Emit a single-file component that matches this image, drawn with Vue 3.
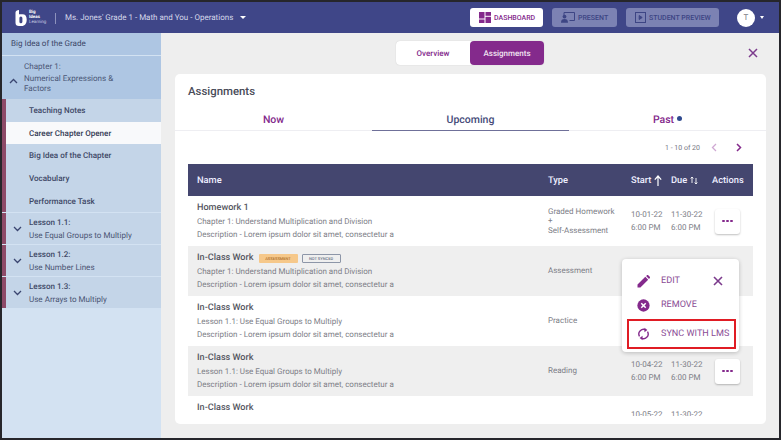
<template>
  <div class="frame">
    <header class="topbar">
      <div class="brand">
        <svg class="logo" width="12" height="16" viewBox="0 0 12 16">
          <path d="M0.5 2.5C0.5 1 2 0.3 4 0V4.2H7.5C10.2 4.2 11.7 6 11.7 9.5C11.7 13.6 10 16 6.5 16H4C1.7 16 0.5 14.8 0.5 12.7Z" fill="#fff" />
          <rect x="4.4" y="6.6" width="3" height="6.6" rx="1.5" fill="#3f4688" />
        </svg>
        <div class="logo-text"><span>Big</span><span>Ideas</span><span class="thin">Learning</span></div>
      </div>
      <div class="course">
        <span>Ms. Jones' Grade 1 - Math and You - Operations</span>
        <i class="caret"></i>
      </div>
      <div class="top-actions">
        <button class="top-btn active dash">
          <svg width="12" height="11" viewBox="0 0 12 11" fill="#842a8c">
            <rect x="0" y="0" width="5.5" height="6.5" /><rect x="6.5" y="0" width="5.5" height="3.8" />
            <rect x="0" y="7.5" width="5.5" height="3.5" /><rect x="6.5" y="4.8" width="5.5" height="6.2" />
          </svg>
          DASHBOARD
        </button>
        <button class="top-btn present">
          <svg width="14" height="11" viewBox="0 0 14 11" fill="none" stroke="#3d4584">
            <path d="M3 3V0.5H13.5V8.5H10" />
            <circle cx="3.5" cy="4.6" r="1.9" fill="#3d4584" stroke="none" />
            <path d="M0 10.8C0 8 1.2 7 3.5 7S7 8 7 10.8Z" fill="#3d4584" stroke="none" />
            <path d="M8.5 8.5H11" />
          </svg>
          PRESENT
        </button>
        <button class="top-btn preview">
          <svg width="11" height="11" viewBox="0 0 11 11" fill="none" stroke="#3d4584" stroke-width="1">
            <rect x="0.5" y="0.5" width="10" height="10" />
            <path d="M4.2 3.5L7.2 5.5L4.2 7.5Z" fill="#3d4584" />
          </svg>
          STUDENT PREVIEW
        </button>
      </div>
      <div class="avatar">T</div>
      <i class="caret small"></i>
    </header>

    <div class="body">
      <aside class="sidebar">
        <div class="side-top">Big Idea of the Grade</div>
        <div class="side-chapter">
          <svg class="chev" width="9" height="6" viewBox="0 0 9 6"><path d="M1 5L4.5 1.5L8 5" fill="none" stroke="#3a4570" stroke-width="1.3" /></svg>
          <div>
            <div>Chapter 1:</div>
            <div class="chapter-name">Numerical Expressions &amp; Factors</div>
          </div>
        </div>
        <div class="side-sub">
          <div v-for="item in subItems" :key="item" class="sub-item" :class="{ current: item === 'Career Chapter Opener' }">{{ item }}</div>
        </div>
        <div v-for="lesson in lessons" :key="lesson.title" class="lesson">
          <svg class="chev" width="9" height="6" viewBox="0 0 9 6"><path d="M1 1L4.5 4.5L8 1" fill="none" stroke="#3a4570" stroke-width="1.3" /></svg>
          <div>
            <div class="lesson-title">{{ lesson.title }}</div>
            <div>{{ lesson.name }}</div>
          </div>
        </div>
      </aside>

      <main class="content">
        <div class="switch-row">
          <div class="switch">
            <div class="switch-item">Overview</div>
            <div class="switch-item on">Assignments</div>
          </div>
          <svg class="close-main" width="10" height="10" viewBox="0 0 10 10"><path d="M1 1L9 9M9 1L1 9" stroke="#7b3a8c" stroke-width="1.5" /></svg>
        </div>

        <section class="card">
          <h2>Assignments</h2>
          <div class="tabs">
            <div class="tab now">Now</div>
            <div class="tab upcoming">Upcoming</div>
            <div class="tab past">Past<i class="dot"></i></div>
          </div>
          <div class="pager">
            <span>1 - 10 of 20</span>
            <svg width="6" height="9" viewBox="0 0 6 9"><path d="M5 1L1.5 4.5L5 8" fill="none" stroke="#cfa9d3" stroke-width="1.3" /></svg>
            <svg width="6" height="9" viewBox="0 0 6 9"><path d="M1 1L4.5 4.5L1 8" fill="none" stroke="#842a8c" stroke-width="1.5" /></svg>
          </div>

          <div class="table">
            <div class="row head">
              <div class="c-name">Name</div>
              <div class="c-type">Type</div>
              <div class="c-date">Start
                <svg width="8" height="11" viewBox="0 0 8 11"><path d="M4 11V1.5M0.8 4.6L4 1L7.2 4.6" fill="none" stroke="#fff" stroke-width="1.2" /></svg>
              </div>
              <div class="c-date">Due
                <svg width="8" height="9" viewBox="0 0 8 9"><path d="M2 7V1M0.7 2.5L2 1L3.3 2.5M6 2V8M4.7 6.5L6 8L7.3 6.5" fill="none" stroke="#fff" stroke-width="0.9" /></svg>
              </div>
              <div class="c-act">Actions</div>
            </div>

            <div class="rows">
              <div v-for="(row, i) in rows" :key="i" class="row" :class="{ shaded: i % 2 === 1 }">
                <div class="c-name" :class="{ 'title-only': !row.chapter }">
                  <div class="title">
                    {{ row.title }}
                    <span v-if="row.tags" class="tag orange">ASSESSMENT</span>
                    <span v-if="row.tags" class="tag outline">NOT SYNCED</span>
                  </div>
                  <template v-if="row.chapter">
                    <div>{{ row.chapter }}</div>
                    <div>Description - Lorem ipsum dolor sit amet, consectetur a</div>
                  </template>
                </div>
                <div class="c-type" :class="{ stacked: row.type === 'graded' }">
                  <template v-if="row.type === 'graded'">Graded Homework<br />+<br />Self-Assessment</template>
                  <template v-else>{{ row.type }}</template>
                </div>
                <template v-if="row.start">
                  <div class="c-date">{{ row.start }}<br />6:00 PM</div>
                  <div class="c-date">{{ row.due }}<br />6:00 PM</div>
                </template>
                <div v-if="row.dots" class="c-act"><button class="dots"><i></i><i></i><i></i></button></div>
              </div>
            </div>
          </div>

          <div class="menu">
            <div class="menu-item">
              <svg width="13" height="13" viewBox="0 0 13 13"><path d="M0.5 12.5V9.6L8.3 1.8L11.2 4.7L3.4 12.5ZM9.1 1L10 0.2C10.4 -0.1 10.9 -0.1 11.2 0.2L12.8 1.8C13.1 2.1 13.1 2.6 12.8 3L12 3.9Z" fill="#842a8c" /></svg>
              <span>EDIT</span>
              <svg class="menu-close" width="10" height="10" viewBox="0 0 10 10"><path d="M1 1L9 9M9 1L1 9" stroke="#7b3a8c" stroke-width="1.6" /></svg>
            </div>
            <div class="menu-item">
              <svg width="13" height="13" viewBox="0 0 14 14"><circle cx="7" cy="7" r="6.6" fill="#842a8c" /><path d="M4.6 4.6L9.4 9.4M9.4 4.6L4.6 9.4" stroke="#fff" stroke-width="1.6" /></svg>
              <span>REMOVE</span>
            </div>
            <div class="menu-item sync">
              <svg width="13" height="14" viewBox="0 0 14 14" fill="none" stroke="#842a8c" stroke-width="1.5">
                <path d="M2.7 9.5A5 5 0 0 1 9.6 2.7" /><path d="M11.3 4.5A5 5 0 0 1 4.4 11.3" />
                <path d="M8 0.3L11.2 2.8L8 5Z" fill="#842a8c" stroke="none" /><path d="M6 9L2.8 11.2L6 13.7Z" fill="#842a8c" stroke="none" />
              </svg>
              <span>SYNC WITH LMS</span>
            </div>
          </div>
        </section>
      </main>
    </div>
  </div>
</template>

<script setup>
const subItems = ['Teaching Notes', 'Career Chapter Opener', 'Big Idea of the Chapter', 'Vocabulary', 'Performance Task']

const lessons = [
  { title: 'Lesson 1.1:', name: 'Use Equal Groups to Multiply' },
  { title: 'Lesson 1.2:', name: 'Use Number Lines' },
  { title: 'Lesson 1.3:', name: 'Use Arrays to Multiply' }
]

const rows = [
  { title: 'Homework 1', chapter: 'Chapter 1: Understand Multiplication and Division', type: 'graded', start: '10-01-22', due: '11-30-22', dots: true },
  { title: 'In-Class Work', tags: true, chapter: 'Chapter 1: Understand Multiplication and Division', type: 'Assessment' },
  { title: 'In-Class Work', chapter: 'Lesson 1.1: Use Equal Groups to Multiply', type: 'Practice' },
  { title: 'In-Class Work', chapter: 'Lesson 1.1: Use Equal Groups to Multiply', type: 'Reading', start: '10-04-22', due: '11-30-22', dots: true },
  { title: 'In-Class Work', type: '', start: '10-05-22', due: '11-30-22' }
]
</script>

<style>
html, body { margin: 0; background: #222; overflow: hidden; }
</style>

<style scoped>
.frame {
  width: 781px;
  height: 440px;
  box-sizing: border-box;
  border: 2px solid #26262b;
  display: flex;
  flex-direction: column;
  overflow: hidden;
  font-family: Roboto, "Liberation Sans", sans-serif;
  text-rendering: geometricPrecision;
  color: #4d4f5e;
  background: #eeeeee;
}

.topbar {
  height: 31px;
  flex: none;
  display: flex;
  align-items: center;
  padding: 0 0 0 13px;
  background: #3f4688;
  color: #d5d8ea;
}
.brand { display: flex; align-items: center; gap: 2px; width: 41px; height: 22px; position: relative; }
.brand::after { content: ""; position: absolute; right: 0; top: 6px; height: 11px; width: 1px; background: #8d92bd; }
.logo-text { display: flex; flex-direction: column; font-size: 4.5px; line-height: 5px; color: #fff; font-weight: 700; }
.logo-text .thin { font-weight: 400; color: #c9cce3; }
.course { display: flex; align-items: center; gap: 6px; padding-left: 9px; font-size: 8px; }
.caret { width: 0; height: 0; border: 3px solid transparent; border-top: 3.5px solid #fff; border-bottom: 0; margin-left: 1px; }
.caret.small { border-width: 2.5px; border-top-width: 3px; border-bottom: 0; margin-left: 5px; margin-right: 15px; }
.top-actions { margin-left: auto; display: flex; align-items: center; gap: 9px; }
.top-btn {
  height: 19px;
  display: flex;
  align-items: center;
  gap: 3px;
  padding: 0 0 0 9px;
  border: 0;
  border-radius: 3px;
  background: #7c82b3;
  color: #3d4584;
  font: 500 7px Roboto, sans-serif;
  text-rendering: geometricPrecision;
  white-space: nowrap;
}
.top-btn.active { background: #fff; color: #842a8c; }
.dash { width: 73px; }
.present { width: 65px; }
.preview { width: 93px; }
.avatar {
  width: 18px;
  height: 18px;
  margin-left: 18px;
  border-radius: 50%;
  background: #fff;
  color: #7a7a85;
  font-size: 8px;
  display: flex;
  align-items: center;
  justify-content: center;
}

.body { flex: 1; display: flex; min-height: 0; }

.sidebar {
  width: 159px;
  flex: none;
  background: #d3e2f2;
  font-size: 8.05px;
  line-height: 10px;
}
.side-top { height: 22px; display: flex; align-items: center; padding-left: 9px; background: #aec6e3; color: #3c4668; margin-bottom: 1px; }
.side-chapter { height: 43px; display: flex; align-items: center; gap: 6px; padding-left: 7px; background: #aec6e3; color: #4b5676; line-height: 9.5px; }
.chapter-name { margin-top: 3px; width: 100px; }
.side-chapter .chev { margin-top: 6px; }
.side-sub { background: #c4d5e8; border-left: 4px solid #8d4a68; }
.sub-item { height: 22.7px; box-sizing: border-box; padding-top: 1px; display: flex; align-items: center; padding-left: 23px; color: #3e4866; font-weight: 500; }
.sub-item.current { background: #f8f9fb; color: #333a55; }
.lesson {
  height: 31px;
  display: flex;
  align-items: center;
  gap: 7px;
  padding: 1px 0 0 7px;
  margin-top: 1px;
  background: #c4d5e8;
  border-left: 4px solid #8d4a68;
  box-sizing: border-box;
  color: #4a5473;
}
.lesson-title { font-weight: 500; margin-bottom: 3px; color: #3e4866; }

.content { flex: 1; min-width: 0; display: flex; flex-direction: column; }
.switch-row { position: relative; height: 41px; flex: none; display: flex; align-items: flex-start; justify-content: center; padding-top: 8px; box-sizing: border-box; }
.switch { display: flex; height: 24px; background: #fff; border-radius: 4px; box-shadow: 0 0 1px #bbb; }
.switch-item { width: 74px; display: flex; align-items: center; justify-content: center; font-size: 8px; font-weight: 500; color: #842a8c; border-radius: 4px; }
.switch-item.on { background: #842a8c; color: #f2e6f3; }
.close-main { position: absolute; right: 21px; top: 15px; }

.card {
  position: relative;
  margin: 0 13px 0 14px;
  height: 350px;
  background: #fff;
  border-radius: 5px;
  overflow: hidden;
}
h2 { margin: 0; padding: 9px 0 0 13px; height: 22px; font-size: 11.4px; line-height: 16px; font-weight: 500; color: #4a4c59; }
.tabs { display: flex; height: 25px; border-bottom: 1px solid #eeeef2; }
.tab { flex: none; width: 197px; display: flex; align-items: center; justify-content: center; font-size: 10.5px; font-weight: 500; box-sizing: border-box; padding-top: 3px; }
.now, .past { color: #842a8c; }
.upcoming { color: #454a78; border-bottom: 1px solid #6f7099; height: 26px; padding-top: 4px; }
.dot { width: 5px; height: 5px; border-radius: 50%; background: #2f4a8f; margin-left: 3px; margin-top: -1px; }
.pager { height: 33px; display: flex; align-items: center; justify-content: flex-end; gap: 11px; padding-right: 24px; font-size: 7px; color: #75767f; }
.pager svg + svg { margin-left: 8px; }

.table { margin: 0 13px; }
.rows { height: 220px; overflow: hidden; }
.row { display: flex; align-items: center; height: 50px; padding-left: 9px; font-size: 8px; color: #7d7e87; line-height: 13.5px; }
.row.head { height: 32px; box-sizing: border-box; padding-top: 1px; background: #44466f; color: #eef; font-size: 9.3px; font-weight: 500; }
.row.shaded { background: #efefef; }
.c-name { width: 351px; flex: none; white-space: nowrap; line-height: 13px; }
.c-name.title-only { align-self: flex-start; padding-top: 6px; }
.c-type { width: 83px; flex: none; }
.c-type.stacked { line-height: 9.4px; }
.c-date { width: 40px; flex: none; white-space: nowrap; }
.head .c-date { display: flex; align-items: center; gap: 3px; }
.c-act { flex: 1; display: flex; padding-left: 4px; }
.head .c-act { padding-left: 1px; }
.title { font-size: 9.1px; font-weight: 500; color: #55565f; display: flex; align-items: center; height: 13px; }
.tag { display: block; box-sizing: border-box; width: 39px; height: 9px; font-size: 4px; line-height: 9px; text-align: center; border-radius: 1px; }
.tag.orange { background: #f6c88a; color: #b0702c; margin-left: 5px; }
.tag.outline { border: 1px solid #8d96a8; color: #6c7488; line-height: 7px; margin-left: 4px; }
.dots {
  width: 25px;
  height: 25px;
  border: 0;
  border-radius: 3px;
  background: #fff;
  box-shadow: 0 1px 2px rgba(0, 0, 0, 0.25);
  display: flex;
  align-items: center;
  justify-content: center;
  gap: 1.5px;
}
.dots i { width: 2.4px; height: 2.4px; border-radius: 50%; background: #842a8c; }

.menu {
  position: absolute;
  left: 447px;
  top: 185px;
  width: 117px;
  height: 93px;
  padding-top: 10px;
  box-sizing: border-box;
  background: #fff;
  border-radius: 4px;
  box-shadow: 0 1px 4px rgba(0, 0, 0, 0.22);
  font-size: 9.1px;
  color: #8a4c95;
}
.menu-item { position: relative; height: 24px; display: flex; align-items: center; gap: 11px; padding-left: 15px; }
.menu-close { position: absolute; right: 16px; top: 7px; }
.menu-item.sync {
  height: 30px;
  margin: 2px 3px 0 5px;
  padding-left: 8px;
  border: 2px solid #e01c24;
  box-sizing: border-box;
}
</style>
